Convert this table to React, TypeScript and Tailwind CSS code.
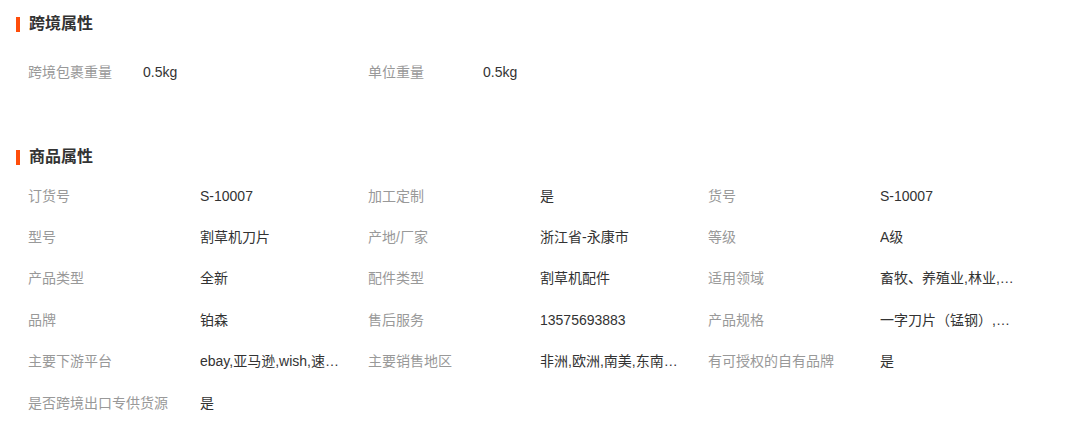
const cross = [
  { label: '跨境包裹重量', value: '0.5kg' },
  { label: '单位重量', value: '0.5kg' },
];

const attrs = [
  { label: '订货号', value: 'S-10007' },
  { label: '加工定制', value: '是' },
  { label: '货号', value: 'S-10007' },
  { label: '型号', value: '割草机刀片' },
  { label: '产地/厂家', value: '浙江省-永康市' },
  { label: '等级', value: 'A级' },
  { label: '产品类型', value: '全新' },
  { label: '配件类型', value: '割草机配件' },
  { label: '适用领域', value: '畜牧、养殖业,林业,农业,园林' },
  { label: '品牌', value: '铂森' },
  { label: '售后服务', value: '13575693883' },
  { label: '产品规格', value: '一字刀片（锰钢）,一字刀片（普通）' },
  { label: '主要下游平台', value: 'ebay,亚马逊,wish,速卖通,独立站' },
  { label: '主要销售地区', value: '非洲,欧洲,南美,东南亚,北美' },
  { label: '有可授权的自有品牌', value: '是' },
  { label: '是否跨境出口专供货源', value: '是' },
];

function Title({ text }: { text: string }) {
  return (
    <div className="flex items-center h-5">
      <span className="w-1 h-[15px] bg-[#ff4d0a]" />
      <span className="ml-[9px] text-base font-bold text-[#333]">{text}</span>
    </div>
  );
}

export default function App() {
  return (
    <div
      className="w-[1068px] h-[427px] bg-white pl-4 pt-[14px] overflow-hidden"
      style={{ fontFamily: '"Liberation Sans", "Noto Sans CJK SC", sans-serif' }}
    >
      <Title text="跨境属性" />
      <div className="flex pl-3 mt-[18px]">
        {cross.map(c => (
          <div key={c.label} className="w-[340px] h-10 flex items-center text-sm">
            <span className="w-[115px] text-[#999]">{c.label}</span>
            <span className="text-[#333]">{c.value}</span>
          </div>
        ))}
      </div>

      <div className="mt-[55px]">
        <Title text="商品属性" />
      </div>
      <div className="grid grid-cols-[340px_340px_340px] pl-3 mt-2">
        {attrs.map(a => (
          <div key={a.label} className="h-[41.4px] flex items-center text-sm">
            <span className="w-[172px] shrink-0 text-[#999]">{a.label}</span>
            <span className="max-w-[141px] truncate text-[#333]">{a.value}</span>
          </div>
        ))}
      </div>
    </div>
  );
}
